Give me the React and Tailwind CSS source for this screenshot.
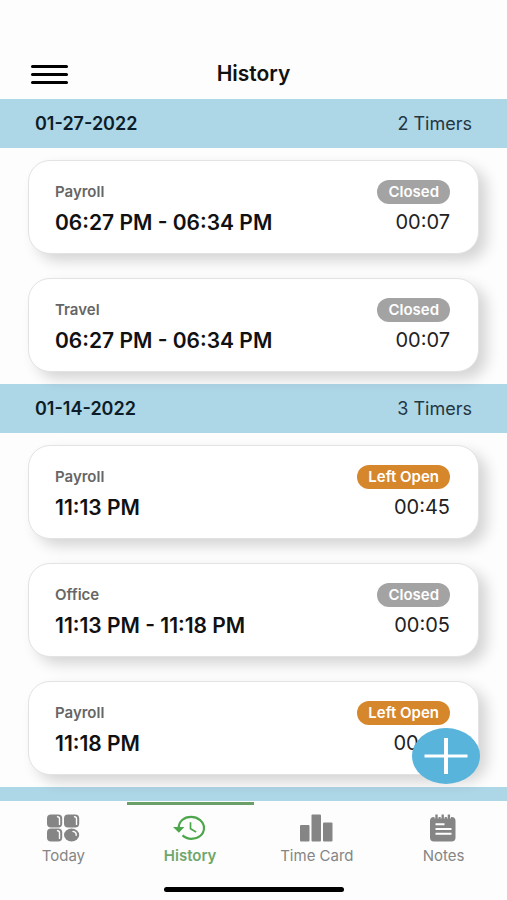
import clsx from "clsx";

const days = [
  {
    date: "01-27-2022",
    timers: [
      { task: "Payroll", time: "06:27 PM - 06:34 PM", status: "Closed", total: "00:07" },
      { task: "Travel", time: "06:27 PM - 06:34 PM", status: "Closed", total: "00:07" },
    ],
  },
  {
    date: "01-14-2022",
    timers: [
      { task: "Payroll", time: "11:13 PM", status: "Left Open", total: "00:45" },
      { task: "Office", time: "11:13 PM - 11:18 PM", status: "Closed", total: "00:05" },
      { task: "Payroll", time: "11:18 PM", status: "Left Open", total: "00:40" },
    ],
  },
];

function TodayIcon() {
  return (
    <svg viewBox="0 0 34 28" className="h-7 w-[34px]" aria-hidden="true">
      <g fill="currentColor">
        <rect x="1" y="0.5" width="15.2" height="13" rx="4" />
        <rect x="18" y="0.5" width="15.2" height="13" rx="4" />
        <rect x="1" y="14.5" width="15.2" height="13" rx="4" />
        <ellipse cx="25.6" cy="21" rx="7.6" ry="6.5" />
      </g>
      <g fill="none" stroke="#fff" strokeWidth="1.4" strokeLinecap="round">
        <path d="M11.500 2.800q2 0 2 2v5.600" />
        <path d="M28.500 2.800q2 0 2 2v5.600" />
        <path d="M11.500 16.800q2 0 2 2v5.600" />
        <path d="M27 17.400c2.300.4 3.400 1.900 3.200 3.800" />
      </g>
    </svg>
  );
}

function HistoryIcon() {
  return (
    <svg viewBox="0 0 34 28" className="h-7 w-[34px]" aria-hidden="true">
      <g fill="none" stroke="currentColor" strokeWidth="2.2">
        <path d="M5.800 14C5.500 7.500 11 2.900 18 2.900S31 7.700 31 14 25.500 24.800 18.500 24.800c-3.800 0-6.700-1.200-9-3.400" />
        <path d="M17.500 8.300v6.500l5.600 3.300" strokeWidth="1.700" />
      </g>
      <path d="M0 13.100h11.400l-5.500 5.600z" fill="currentColor" />
    </svg>
  );
}

function TimeCardIcon() {
  return (
    <svg viewBox="0 0 34 28" className="h-7 w-[34px]" aria-hidden="true">
      <g fill="currentColor">
        <rect x="0" y="11" width="9.500" height="16.500" rx="1" />
        <rect x="11.500" y="0.500" width="9.500" height="27" rx="1" />
        <rect x="23" y="8.500" width="9.500" height="19" rx="1" />
      </g>
    </svg>
  );
}

function NotesIcon() {
  return (
    <svg viewBox="0 0 34 28" className="h-7 w-[34px]" aria-hidden="true">
      <rect x="3" y="3" width="25.500" height="24.500" rx="4" fill="currentColor" />
      <path d="M9.500 0v4.500M15.700 0v4.500M21.900 0v4.500" stroke="#fdfdfd" strokeWidth="4" />
      <path d="M9.500 0.500v5M15.700 0.500v5M21.900 0.500v5" stroke="currentColor" strokeWidth="2.400" />
      <path d="M8.500 10.200h9M8.500 15h16M8.500 19.800h16" stroke="#fff" strokeWidth="2" />
    </svg>
  );
}

const tabs = [
  { label: "Today", Icon: TodayIcon },
  { label: "History", Icon: HistoryIcon, active: true },
  { label: "Time Card", Icon: TimeCardIcon },
  { label: "Notes", Icon: NotesIcon },
];

function Header() {
  return (
    <header className="grid shrink-0 grid-cols-[1fr_auto_1fr] items-center px-[31px] pt-[50px] pb-px">
      <button type="button" aria-label="Menu" className="flex h-12 w-[37px] flex-col justify-center gap-[5px]">
        <span className="h-[3px] w-full rounded-full bg-black" />
        <span className="h-[3px] w-full rounded-full bg-black" />
        <span className="h-[3px] w-full rounded-full bg-black" />
      </button>
      <h1 className="text-[21px] font-semibold text-[#111]">History</h1>
    </header>
  );
}

function TimerCard({ task, time, status, total }) {
  return (
    <li className="flex h-[94px] items-start justify-between rounded-[22px] border border-[#e4e2e4] bg-white pt-[19px] pr-7 pl-[26px] shadow-[8px_7px_14px_rgba(0,0,0,0.16)]">
      <div>
        <p className="text-[15px] leading-6 font-semibold text-[#666]">{task}</p>
        <p className="mt-[5px] text-[21px] leading-7 font-semibold text-[#111]">{time}</p>
      </div>
      <div className="flex flex-col items-end">
        <span
          className={clsx(
            "rounded-full px-[11px] text-[15px] leading-6 font-semibold text-white",
            status === "Closed" ? "bg-[#a3a3a3]" : "bg-[#d6862b]",
          )}
        >
          {status}
        </span>
        <p className="mt-1 text-xl leading-7 text-[#222]">{total}</p>
      </div>
    </li>
  );
}

function Day({ date, timers }) {
  return (
    <section>
      <div className="flex h-[49px] items-center justify-between bg-[#add6e6] px-[35px] text-lg">
        <h2 className="font-semibold text-[#0c1c28]">{date}</h2>
        <span className="text-[#243642]">{timers.length} Timers</span>
      </div>
      <ul className="flex flex-col gap-6 px-7 py-3">
        {timers.map((timer, i) => (
          <TimerCard key={i} {...timer} />
        ))}
      </ul>
    </section>
  );
}

function TabBar() {
  return (
    <nav className="shrink-0 bg-[#fdfdfd] pt-px pb-2">
      <div className="grid grid-cols-4">
        {tabs.map(({ label, Icon, active }) => (
          <a
            key={label}
            href="#"
            aria-current={active ? "page" : undefined}
            className={clsx(
              "flex flex-col items-center gap-0.5 border-t-[3px] pt-[9px] text-[15px]",
              active ? "border-[#6a9f68] font-semibold text-[#4ea64c]" : "border-transparent text-[#858585]",
            )}
          >
            <Icon />
            <span className={clsx("leading-6", active && "text-[#6fa76b]")}>{label}</span>
          </a>
        ))}
      </div>
      <div className="mx-auto mt-[19px] h-[5px] w-[180px] rounded-full bg-black" />
    </nav>
  );
}

export default function App() {
  return (
    <div className="flex h-dvh flex-col bg-[#fdfdfd] font-['Inter','Liberation_Sans',sans-serif]">
      <Header />
      <div className="relative min-h-0 flex-1">
        <main className="h-full overflow-hidden">
          {days.map((day) => (
            <Day key={day.date} {...day} />
          ))}
          <div className="h-[49px] bg-[#add6e6]" />
        </main>
        <button
          type="button"
          aria-label="Add timer"
          className="absolute right-[27px] bottom-[17px] flex h-14 w-[68px] items-center justify-center rounded-[50%] bg-[#58b4db]"
        >
          <svg viewBox="0 0 44 36" className="h-9 w-11" aria-hidden="true">
            <path d="M0.500 18h43" stroke="#fff" strokeWidth="3.200" />
            <path d="M22 0v36" stroke="#fff" strokeWidth="4" />
          </svg>
        </button>
      </div>
      <TabBar />
    </div>
  );
}
